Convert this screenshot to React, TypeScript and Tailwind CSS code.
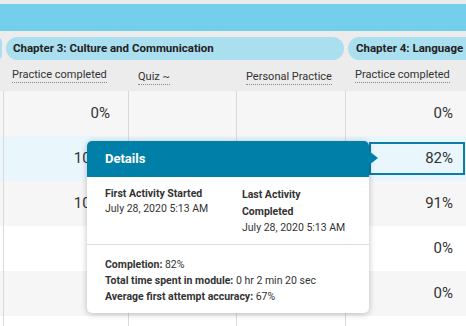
const cols = "grid grid-cols-[3px_125px_108px_109px_121px]";

const rows = [
  { bg: "bg-[#f6f6f6]", a: "0%", d: "0%" },
  { bg: "bg-[#e9f6fc]", a: "100%", d: "82%" },
  { bg: "bg-[#f6f6f6]", a: "100%", d: "91%" },
  { bg: "bg-white", a: "", d: "0%" },
  { bg: "bg-[#f6f6f6]", a: "", d: "0%" },
  { bg: "bg-white", a: "", d: "" },
];

function HeaderLabel({ text }: { text: string }) {
  return (
    <span className="border-b border-dotted border-[#888] leading-[14px] pb-[1px]">{text}</span>
  );
}

export default function App() {
  return (
    <div
      className="relative w-[466px] h-[326px] overflow-hidden bg-white text-[#333]"
      style={{ fontFamily: "Roboto, 'Liberation Sans', sans-serif" }}
    >
      <div className="h-[4px] bg-[#ececec]" />
      <div className="h-[27px] bg-[#74cfec]" />

      {/* Chapter headers */}
      <div className="bg-[#ececec] h-[60px]">
        <div className="flex gap-[4px] pt-[6px] h-[29px] whitespace-nowrap">
          <div className="shrink-0 w-[5px] -ml-[3px] rounded-r-full bg-[#aadff0]" />
          <div className="shrink-0 w-[338px] rounded-full bg-[#aadff0] flex items-center pl-[7px] text-[11.5px] font-bold text-[#222]">
            Chapter 3: Culture and Communication
          </div>
          <div className="shrink-0 w-[140px] rounded-l-full bg-[#aadff0] flex items-center pl-[8px] text-[11.5px] font-bold text-[#222]">
            Chapter 4: Language
          </div>
        </div>
        <div className={`${cols} h-[31px] items-center text-[11px] text-[#333] whitespace-nowrap`}>
          <div />
          <div className="pl-[9px]"><HeaderLabel text="Practice completed" /></div>
          <div className="pl-[10px] pt-[3px]"><HeaderLabel text="Quiz ~" /></div>
          <div className="pl-[10px] pt-[3px]"><HeaderLabel text="Personal Practice" /></div>
          <div className="pl-[10px]"><HeaderLabel text="Practice completed" /></div>
        </div>
      </div>

      {/* Body rows */}
      <div>
        {rows.map((r, i) => (
          <div key={i} className={`${cols} h-[45px] ${r.bg} text-[15px]`}>
            <div />
            <div className="border-l border-[#d9d9d9] flex items-center justify-end pr-[18px]">{r.a}</div>
            <div className="border-l border-[#d9d9d9]" />
            <div className="border-l border-[#d9d9d9]" />
            <div className="border-l border-[#d9d9d9] flex items-center justify-end pr-[13px]">{r.d}</div>
          </div>
        ))}
      </div>

      {/* Selected cell outline */}
      <div className="absolute left-[369px] top-[142px] w-[96px] h-[33px] border-2 border-[#0b7ea8]" />

      {/* Tooltip */}
      <div className="absolute left-[87px] top-[141px] w-[282px] h-[172px] bg-white rounded-[5px] shadow-[0_1px_6px_rgba(0,0,0,0.25)] text-[10.5px] text-[#333]">
        <div className="h-[36px] bg-[#0080a8] rounded-t-[5px] flex items-center pl-[18px] text-[13px] font-bold text-white">
          Details
        </div>
        <div className="absolute left-[282px] top-[10px] w-0 h-0 border-y-[7px] border-y-transparent border-l-[9px] border-l-[#0080a8]" />
        <div className="h-[67px] flex px-[18px] pt-[9px] leading-[15px]">
          <div className="w-[137px]">
            <div className="font-bold">First Activity Started</div>
            <div>July 28, 2020 5:13 AM</div>
          </div>
          <div>
            <div className="font-bold leading-[17px]">Last Activity<br />Completed</div>
            <div>July 28, 2020 5:13 AM</div>
          </div>
        </div>
        <div className="border-t border-[#dddddd] px-[18px] pt-[12px] leading-[16px]">
          <div><span className="font-bold">Completion:</span> 82%</div>
          <div><span className="font-bold">Total time spent in module:</span> 0 hr 2 min 20 sec</div>
          <div><span className="font-bold">Average first attempt accuracy:</span> 67%</div>
        </div>
      </div>
    </div>
  );
}
